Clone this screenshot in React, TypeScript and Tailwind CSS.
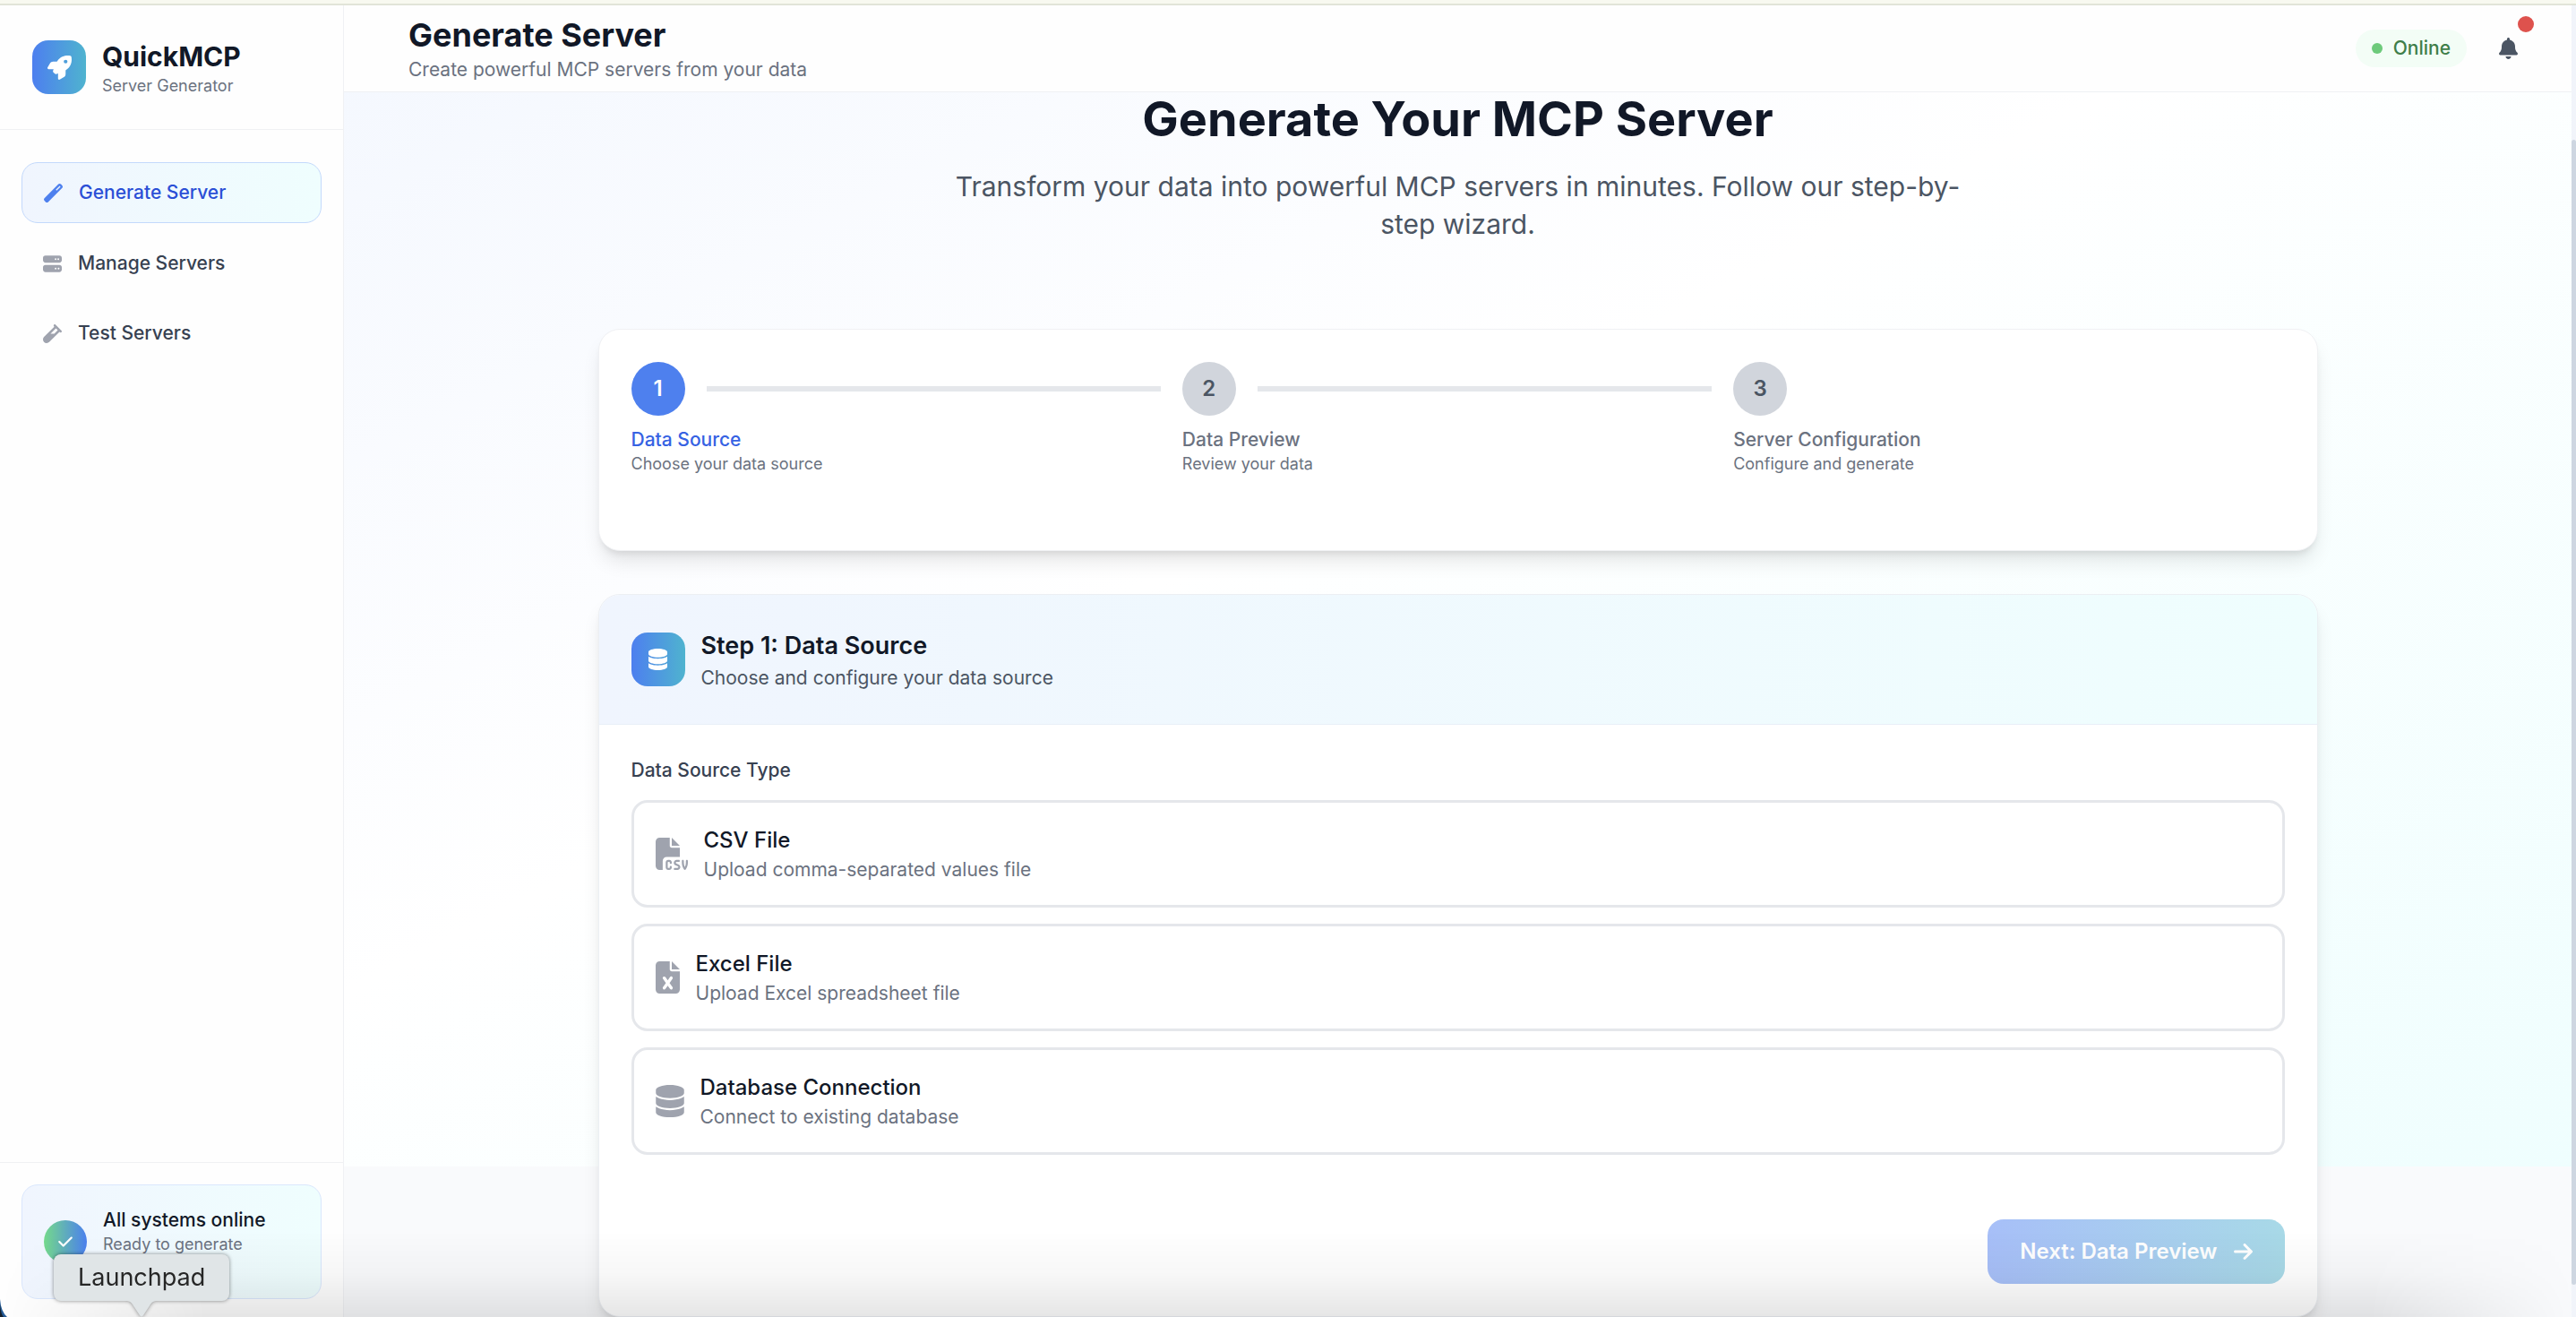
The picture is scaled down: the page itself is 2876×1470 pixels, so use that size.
import type { ReactNode } from "react";
import {
  FaArrowRight,
  FaBell,
  FaCheck,
  FaDatabase,
  FaFileCsv,
  FaFileExcel,
  FaRocket,
  FaServer,
  FaVial,
  FaWandMagic,
} from "react-icons/fa6";

const navItems = [
  { label: "Generate Server", icon: <FaWandMagic />, active: true },
  { label: "Manage Servers", icon: <FaServer />, active: false },
  { label: "Test Servers", icon: <FaVial />, active: false },
];

const steps = [
  { title: "Data Source", note: "Choose your data source" },
  { title: "Data Preview", note: "Review your data" },
  { title: "Server Configuration", note: "Configure and generate" },
];

const sources = [
  {
    id: "csv",
    title: "CSV File",
    note: "Upload comma-separated values file",
    icon: <FaFileCsv className="h-9 w-9" />,
  },
  {
    id: "excel",
    title: "Excel File",
    note: "Upload Excel spreadsheet file",
    icon: <FaFileExcel className="h-9 w-[27px]" />,
  },
  {
    id: "database",
    title: "Database Connection",
    note: "Connect to existing database",
    icon: <FaDatabase className="h-9 w-8" />,
  },
];

function GradientTile({ children }: { children: ReactNode }) {
  return (
    <div className="flex size-15 shrink-0 items-center justify-center rounded-[18px] bg-linear-to-r/srgb from-[#4d7fef] to-[#4fb3cf] text-white">
      {children}
    </div>
  );
}

function Sidebar() {
  return (
    <aside className="flex w-96 shrink-0 flex-col border-r border-[#f0f1f4] bg-[#fefefe]">
      <div className="flex h-[139px] shrink-0 items-center gap-[18px] border-b border-[#f0f1f3] px-9">
        <GradientTile>
          <FaRocket className="size-[27px]" />
        </GradientTile>
        <div>
          <p className="text-[30px] leading-[42px] font-bold text-[#111827]">QuickMCP</p>
          <p className="text-[18px] leading-6 text-[#6b7280]">Server Generator</p>
        </div>
      </div>
      <nav className="flex flex-1 flex-col gap-3 px-6 py-9">
        {navItems.map((item) => (
          <a
            key={item.label}
            href="#"
            className={
              item.active
                ? "flex items-center gap-[18px] rounded-[18px] border border-[#c3d9fc] bg-linear-to-r/srgb from-[#f0f5fe] to-[#effefe] px-6 py-[18px] text-[21px] leading-[30px] font-medium text-[#2b4fd6]"
                : "flex items-center gap-[18px] rounded-[18px] px-6 py-[18px] text-[21px] leading-[30px] font-medium text-[#374151]"
            }
          >
            <span className={item.active ? "text-[#4e80ee]" : "text-[#9fa3ae]"}>{item.icon}</span>
            {item.label}
          </a>
        ))}
      </nav>
      <div className="border-t border-[#f0f1f3] px-6 pt-6 pb-5">
        <div className="flex items-center gap-[18px] rounded-[18px] border border-[#dae7fd] bg-linear-to-r/srgb from-[#f0f5fe] to-[#effefe] p-6">
          <div className="flex size-12 shrink-0 items-center justify-center rounded-full bg-linear-to-r/srgb from-[#74d98b] to-[#4b80ee] text-white">
            <FaCheck className="size-[18px]" />
          </div>
          <div className="pb-6">
            <p className="text-[21px] leading-[30px] font-medium text-[#111827]">All systems online</p>
            <p className="text-[18px] leading-6 text-[#6b7280]">Ready to generate</p>
          </div>
        </div>
      </div>
    </aside>
  );
}

function Header() {
  return (
    <header className="flex h-[97px] shrink-0 items-center justify-between border-b border-[#eff1f4] bg-[#fefefe] pr-12 pl-18">
      <div>
        <h1 className="text-[36px] leading-12 font-bold text-[#111827]">Generate Server</h1>
        <p className="text-[21px] leading-[30px] text-[#6b7280]">Create powerful MCP servers from your data</p>
      </div>
      <div className="flex items-center gap-6">
        <div className="flex items-center gap-3 rounded-full bg-[#f3fdf6] px-[18px] py-1.5 text-[21px] leading-[30px] font-medium text-[#3f7e49]">
          <span className="size-3 rounded-full bg-[#6dca7b]" />
          Online
        </div>
        <button type="button" aria-label="Notifications" className="relative p-3 text-[#4b5563]">
          <FaBell className="my-1.5 h-6 w-[21px]" />
          <span className="absolute -top-1.5 -right-1.5 size-[18px] rounded-full bg-[#de524d]" />
        </button>
      </div>
    </header>
  );
}

function Stepper() {
  return (
    <ol className="grid grid-cols-3 rounded-3xl border border-[#f0f1f4] bg-white px-9 pt-9 pb-21 shadow-[0_15px_22px_-4px_rgba(0,0,0,0.1),0_6px_9px_-4px_rgba(0,0,0,0.1)]">
      {steps.map((step, index) => (
        <li key={step.title}>
          <div className="flex items-center">
            <span
              className={
                index === 0
                  ? "flex size-15 items-center justify-center rounded-full bg-[#4e80ee] text-[24px] leading-9 font-semibold text-white"
                  : "flex size-15 items-center justify-center rounded-full bg-[#d1d5dc] text-[24px] leading-9 font-semibold text-[#4b5563]"
              }
            >
              {index + 1}
            </span>
            {index < steps.length - 1 && <span className="mx-6 h-1.5 flex-1 bg-[#e5e7eb]" />}
          </div>
          <p
            className={
              index === 0
                ? "mt-3 text-[21px] leading-[30px] font-medium text-[#3662e3]"
                : "mt-3 text-[21px] leading-[30px] font-medium text-[#6b7280]"
            }
          >
            {step.title}
          </p>
          <p className="text-[18px] leading-6 text-[#6b7280]">{step.note}</p>
        </li>
      ))}
    </ol>
  );
}

function SourceCard() {
  return (
    <section className="overflow-hidden rounded-3xl border border-[#eceff3] bg-white shadow-[0_15px_22px_-4px_rgba(0,0,0,0.1),0_6px_9px_-4px_rgba(0,0,0,0.1)]">
      <div className="flex items-center gap-[18px] border-b border-[#e8eff8] bg-linear-to-r/srgb from-[#f0f5fe] to-[#effefe] p-9">
        <GradientTile>
          <FaDatabase className="h-6 w-[21px]" />
        </GradientTile>
        <div>
          <h3 className="text-[27px] leading-[42px] font-semibold text-[#111827]">Step 1: Data Source</h3>
          <p className="text-[21px] leading-[30px] text-[#4b5563]">Choose and configure your data source</p>
        </div>
      </div>
      <form className="p-9">
        <fieldset>
          <legend className="mb-[18px] text-[21px] leading-[30px] font-medium text-[#374151]">
            Data Source Type
          </legend>
          <div className="flex flex-col gap-[18px]">
            {sources.map((source) => (
              <label
                key={source.id}
                className="flex cursor-pointer items-center gap-[18px] rounded-[18px] border-3 border-[#e5e7eb] p-6"
              >
                <input type="radio" name="source" value={source.id} className="sr-only" />
                <span className="text-[#9fa3ae]">{source.icon}</span>
                <span className="flex flex-col">
                  <span className="text-[24px] leading-9 font-medium text-[#111827]">{source.title}</span>
                  <span className="text-[21px] leading-[30px] text-[#6b7280]">{source.note}</span>
                </span>
              </label>
            ))}
          </div>
        </fieldset>
        <div className="mt-18 flex justify-end">
          <button
            type="button"
            className="flex items-center gap-[18px] rounded-[18px] bg-linear-to-r/srgb from-[#a7bff8] to-[#a8d9e7] px-9 py-[18px] text-[24px] leading-9 font-semibold text-white"
          >
            Next: Data Preview
            <FaArrowRight className="h-6 w-[21px]" />
          </button>
        </div>
      </form>
    </section>
  );
}

function DockTooltip() {
  return (
    <div className="absolute bottom-[18px] left-15 rounded-lg bg-[#e0e5e7] px-[27px] py-2 text-[27px] leading-9 text-[#262626] drop-shadow-[0_0_2px_rgba(0,0,0,0.45)]">
      Launchpad
      <svg className="absolute top-full left-1/2 -ml-4 h-[18px] w-8" viewBox="0 0 32 18" aria-hidden="true">
        <path d="M0 0C5 1 6 4 8 7L14 16Q16 19 18 16L24 7C26 4 27 1 32 0Z" fill="#e0e5e7" />
      </svg>
    </div>
  );
}

export default function App() {
  return (
    <div className="relative flex h-screen flex-col overflow-hidden bg-[#f9fafc] font-['Inter',sans-serif]">
      <div className="h-1.5 shrink-0 border-b-2 border-[#e1e4d8] bg-[#f8f9f0]" />
      <div className="flex min-h-0 flex-1 bg-[linear-gradient(to_bottom_right,#f0f5fe,#ffffff_50%,#effefe)] bg-[length:100%_100%] bg-[position:0_-168px] bg-no-repeat">
        <Sidebar />
        <div className="flex min-w-0 flex-1 flex-col">
          <Header />
          <main className="min-h-0 flex-1 px-18">
            <div className="mx-auto flex max-w-480 flex-col gap-12">
              <div className="mb-12 text-center">
                <h2 className="mb-6 text-[54px] leading-15 font-bold text-[#111827]">Generate Your MCP Server</h2>
                <p className="mx-auto max-w-288 text-[30px] leading-[42px] text-[#4b5563]">
                  Transform your data into powerful MCP servers in minutes. Follow our step-by-step wizard.
                </p>
              </div>
              <Stepper />
              <SourceCard />
            </div>
          </main>
        </div>
        <div className="flex w-[5px] shrink-0 flex-col bg-[#f1f4fa] pt-[150px] pb-9">
          <div className="flex-1 rounded-full bg-[#ced6e1]" />
        </div>
      </div>
      <div className="pointer-events-none absolute inset-x-0 bottom-0 h-24 bg-linear-to-b from-transparent via-black/3 to-black/10 mask-[linear-gradient(to_right,transparent,black_8%,black_92%,transparent)]" />
      <svg className="pointer-events-none absolute bottom-0 left-0 h-5 w-2" viewBox="0 0 8 20" aria-hidden="true">
        <path d="M0 0Q1 14 8 20H0Z" fill="#245a96" />
        <path d="M0 6Q1 17 4 20H0Z" fill="#14202c" />
      </svg>
      <DockTooltip />
    </div>
  );
}
